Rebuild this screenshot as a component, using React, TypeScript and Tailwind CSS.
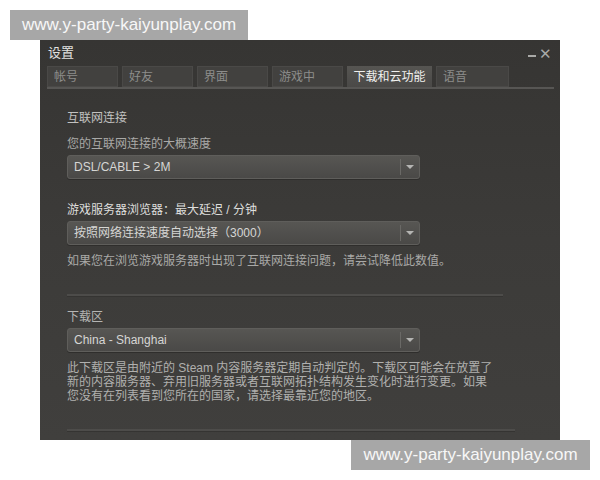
import React from 'react';

const font = { fontFamily: '"Liberation Sans", "Noto Sans CJK SC", sans-serif' };

function Watermark({ className }: { className: string }) {
  return (
    <div
      className={`flex h-[30px] w-[238px] items-center justify-center bg-[#a7a7a7] text-[17px] text-[#f7f7f7] ${className}`}
      style={{ fontFamily: '"Liberation Sans", sans-serif' }}
    >
      www.y-party-kaiyunplay.com
    </div>
  );
}

function Select({ value }: { value: string }) {
  return (
    <div className="flex h-[24px] w-[353px] items-center rounded-[3px] border border-[#5f5e5b] bg-gradient-to-b from-[#575653] to-[#4a4947] shadow-[0_1px_0_#2f2e2c]">
      <div className="flex-1 pl-[6px] text-[12px] text-[#d6d6d4]">{value}</div>
      <div className="h-[16px] w-px bg-[#6a6966]" />
      <div className="flex w-[18px] justify-center">
        <div className="h-0 w-0 border-x-[4px] border-t-[4px] border-x-transparent border-t-[#b5b5b3]" />
      </div>
    </div>
  );
}

const tabs = ['帐号', '好友', '界面', '游戏中', '下载和云功能', '语音'];

export default function App() {
  return (
    <div className="h-[480px] w-[600px] overflow-hidden bg-white" style={font}>
      <Watermark className="ml-[10px] mt-[10px]" />

      {/* Settings window */}
      <div className="ml-[40px] h-[400px] w-[520px] bg-gradient-to-b from-[#363533] via-[#3c3b39] to-[#403f3d]">
        <div className="flex h-[26px] items-center justify-between pl-[8px] pr-[8px]">
          <span className="text-[13px] text-[#e2e2e0]">设置</span>
          <div className="flex items-center gap-[3px] text-[#a9a9a7]">
            <span className="mt-[6px] h-[2px] w-[8px] bg-[#a9a9a7]" />
            <span className="text-[15px] leading-none">✕</span>
          </div>
        </div>

        <div className="ml-[7px] mr-[6px] flex h-[23px] gap-[4px] border-b-[2px] border-[#575654]">
          {tabs.map((t, i) => (
            <div
              key={t}
              className={
                i === 4
                  ? 'flex w-[85px] items-center justify-center bg-gradient-to-b from-[#565552] to-[#4a4947] text-[12px] text-[#f0f0ee]'
                  : `flex ${i === 5 ? 'w-[73px]' : 'w-[71px]'} items-center border border-[#4a4947] bg-[#42413f] pl-[6px] text-[12px] text-[#8d8d8b]`
              }
            >
              {t}
            </div>
          ))}
        </div>

        <div className="pl-[27px] pt-[20px]">
          <div className="text-[12px] text-[#c2c2c0]">互联网连接</div>
          <div className="mt-[8px] text-[12px] text-[#a9a9a7]">您的互联网连接的大概速度</div>
          <div className="mt-[2px]">
            <Select value="DSL/CABLE > 2M" />
          </div>

          <div className="mt-[22px] text-[12px] text-[#dededc]">游戏服务器浏览器：最大延迟 / 分钟</div>
          <div className="mt-[2px]">
            <Select value="按照网络连接速度自动选择（3000）" />
          </div>
          <div className="mt-[7px] text-[12px] text-[#a9a9a7]">
            如果您在浏览游戏服务器时出现了互联网连接问题，请尝试降低此数值。
          </div>

          <div className="mr-[57px] mt-[24px] h-[2px] bg-[#4d4c4a] shadow-[0_1px_0_#353432]" />

          <div className="mt-[12px] text-[12px] text-[#b5b5b3]">下载区</div>
          <div className="mt-[2px]">
            <Select value="China - Shanghai" />
          </div>
          <div className="mt-[9px] w-[430px] text-[12px] leading-[14px] text-[#b0b0ae]">
            此下载区是由附近的 Steam 内容服务器定期自动判定的。下载区可能会在放置了新的内容服务器、弃用旧服务器或者互联网拓扑结构发生变化时进行变更。如果您没有在列表看到您所在的国家，请选择最靠近您的地区。
          </div>

          <div className="mr-[45px] mt-[26px] h-[2px] bg-[#4d4c4a] shadow-[0_1px_0_#353432]" />
        </div>
      </div>

      <Watermark className="ml-[351px] w-[239px]" />
    </div>
  );
}
